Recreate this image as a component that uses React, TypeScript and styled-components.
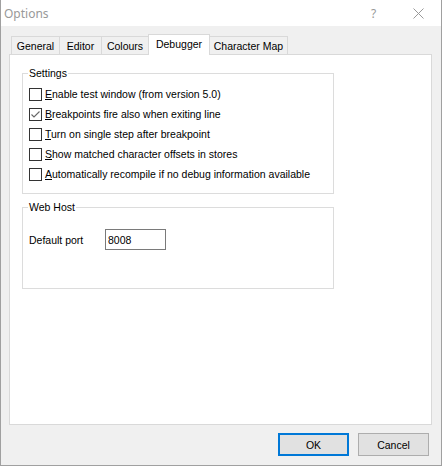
import React from "react";
import styled, { createGlobalStyle } from "styled-components";

const Global = createGlobalStyle`
  html, body { margin: 0; padding: 0; background: #ffffff; }
  body { font-family: "Liberation Sans", Arial, sans-serif; }
  * { box-sizing: border-box; }
`;

const Window = styled.div`
  width: 442px;
  height: 466px;
  background: #f0f0f0;
  border-left: 1px solid #a0a0a0;
  border-right: 1px solid #a0a0a0;
  border-bottom: 1px solid #a0a0a0;
  display: flex;
  flex-direction: column;
  font-family: "Liberation Sans", Arial, sans-serif;
  font-size: 10.5px;
  color: #000;
`;

const TitleBar = styled.div`
  height: 26px;
  background: #ffffff;
  display: flex;
  align-items: center;
  padding-left: 3px;
`;

const TitleText = styled.div`
  flex: 1;
  font-family: "Noto Sans", "Open Sans", sans-serif;
  font-size: 12px;
  color: #999999;
`;

const CaptionButton = styled.div`
  width: 45px;
  height: 26px;
  display: flex;
  align-items: center;
  justify-content: center;
  font-family: "Noto Sans", sans-serif;
  font-size: 12px;
  color: #999999;
`;

const Body = styled.div`
  flex: 1;
  display: flex;
  flex-direction: column;
  padding: 8px 0 0 8px;
`;

const TabStrip = styled.div`
  height: 20px;
  display: flex;
  align-items: flex-end;
  padding-left: 2px;
`;

const Tab = styled.div<{ $w: number; $active?: boolean }>`
  width: ${(p) => p.$w}px;
  height: ${(p) => (p.$active ? 21 : 18)}px;
  margin-bottom: ${(p) => (p.$active ? -1 : 0)}px;
  margin-left: -1px;
  &:first-child { margin-left: 0; }
  border: 1px solid #d9d9d9;
  border-bottom: none;
  background: ${(p) => (p.$active ? "#ffffff" : "#f0f0f0")};
  position: relative;
  z-index: ${(p) => (p.$active ? 2 : 1)};
  display: flex;
  align-items: center;
  justify-content: center;
  padding-bottom: ${(p) => (p.$active ? 3 : 0)}px;
  white-space: nowrap;
`;

const Panel = styled.div`
  width: 423px;
  height: 371px;
  border: 1px solid #d9d9d9;
  background: #ffffff;
  padding: 0 12px;
  display: flex;
  flex-direction: column;
`;

const Group = styled.div<{ $top: number; $bottom: number }>`
  width: 312px;
  margin-top: ${(p) => p.$top}px;
  border: 1px solid #dcdcdc;
  padding: 0 0 ${(p) => p.$bottom}px 6px;
  display: flex;
  flex-direction: column;
`;

const GroupLabel = styled.div`
  align-self: flex-start;
  margin: -8px 0 0 -1px;
  padding: 0 1px;
  height: 14px;
  line-height: 14px;
  background: #ffffff;
`;

const CheckList = styled.div`
  margin-top: 8px;
  display: flex;
  flex-direction: column;
  gap: 7px;
`;

const CheckRow = styled.div`
  height: 13px;
  display: flex;
  align-items: center;
  gap: 3px;
  line-height: 13px;
  white-space: nowrap;
`;

const Box = styled.div`
  width: 13px;
  height: 13px;
  border: 1px solid #333333;
  background: #ffffff;
  display: flex;
  align-items: center;
  justify-content: center;
`;

const Key = styled.span`
  text-decoration: underline;
  text-underline-offset: 1px;
`;

const FieldRow = styled.div`
  margin-top: 15px;
  height: 21px;
  display: flex;
  align-items: center;
`;

const FieldLabel = styled.div`
  width: 76px;
`;

const Input = styled.div`
  width: 61px;
  height: 21px;
  border: 1px solid #7a7a7a;
  background: #ffffff;
  padding-left: 2px;
  display: flex;
  align-items: center;
`;

const Footer = styled.div`
  display: flex;
  justify-content: flex-end;
  gap: 9px;
  padding: 8px 12px 0 0;
`;

const Button = styled.div<{ $default?: boolean }>`
  width: 71px;
  height: 23px;
  background: #e1e1e1;
  border: ${(p) => (p.$default ? "2px solid #0078d7" : "1px solid #adadad")};
  display: flex;
  align-items: center;
  justify-content: center;
`;

const CheckMark = () => (
  <svg width="11" height="11" viewBox="0 0 11 11">
    <path d="M1.5 5.5 L4 8 L9.5 2.5" fill="none" stroke="#666666" strokeWidth="1.1" />
  </svg>
);

const CloseIcon = () => (
  <svg width="11" height="11" viewBox="0 0 11 11">
    <path d="M0.5 0.5 L10.5 10.5 M10.5 0.5 L0.5 10.5" stroke="#999999" strokeWidth="1" />
  </svg>
);

const tabs: { label: string; w: number; active?: boolean }[] = [
  { label: "General", w: 49 },
  { label: "Editor", w: 43 },
  { label: "Colours", w: 48 },
  { label: "Debugger", w: 62, active: true },
  { label: "Character Map", w: 79 },
];

const checks: { key: string; rest: string; checked?: boolean }[] = [
  { key: "E", rest: "nable test window (from version 5.0)" },
  { key: "B", rest: "reakpoints fire also when exiting line", checked: true },
  { key: "T", rest: "urn on single step after breakpoint" },
  { key: "S", rest: "how matched character offsets in stores" },
  { key: "A", rest: "utomatically recompile if no debug information available" },
];

export default function App() {
  return (
    <>
      <Global />
      <Window>
        <TitleBar>
          <TitleText>Options</TitleText>
          <CaptionButton>?</CaptionButton>
          <CaptionButton>
            <CloseIcon />
          </CaptionButton>
        </TitleBar>
        <Body>
          <TabStrip>
            {tabs.map((t) => (
              <Tab key={t.label} $w={t.w} $active={t.active}>
                {t.label}
              </Tab>
            ))}
          </TabStrip>
          <Panel>
            <Group $top={18} $bottom={12}>
              <GroupLabel>Settings</GroupLabel>
              <CheckList>
                {checks.map((c) => (
                  <CheckRow key={c.key}>
                    <Box>{c.checked && <CheckMark />}</Box>
                    <span>
                      <Key>{c.key}</Key>
                      {c.rest}
                    </span>
                  </CheckRow>
                ))}
              </CheckList>
            </Group>
            <Group $top={13} $bottom={38}>
              <GroupLabel>Web Host</GroupLabel>
              <FieldRow>
                <FieldLabel>Default port</FieldLabel>
                <Input>8008</Input>
              </FieldRow>
            </Group>
          </Panel>
          <Footer>
            <Button $default>OK</Button>
            <Button>Cancel</Button>
          </Footer>
        </Body>
      </Window>
    </>
  );
}
